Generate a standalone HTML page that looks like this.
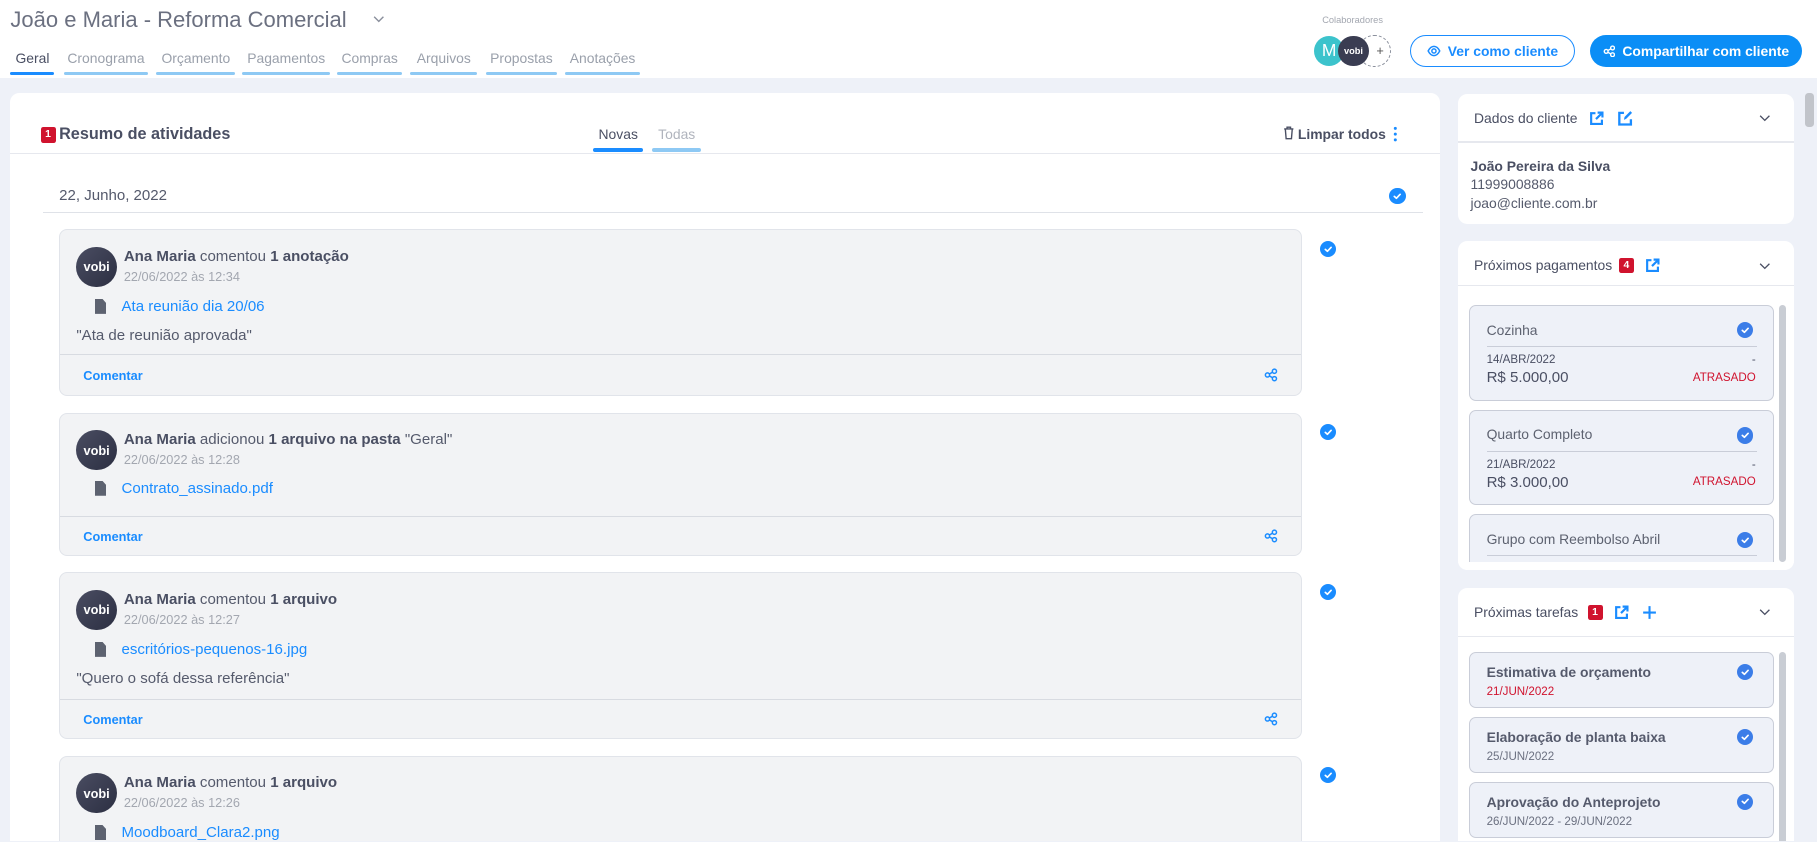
<!DOCTYPE html>
<html><head><meta charset="utf-8">
<style>
html{zoom:1.1588;overflow:hidden;background:#eef1f8;height:100%}
*{box-sizing:border-box;margin:0;padding:0}
body{width:1568px;height:726px;overflow:hidden;background:#eef1f8;font-family:"Liberation Sans",sans-serif;color:#4a4f63}
#w{position:relative;width:1568px;height:726px;overflow:hidden}
.a{position:absolute}
.hdr{left:0;top:0;width:1568px;height:67px;background:#fff}
.tab{top:43px;font-size:12px;color:#9aa0ab;text-align:center}
.bar{top:62px;height:3px;border-radius:2px;background:#8ec9f4}
.btn{border-radius:15px;font-size:13px;font-weight:bold;display:flex;align-items:center;justify-content:center;gap:6px}
.panel{background:#fff;border-radius:8px}
.chk{width:14px;height:14px;border-radius:50%;background:#1a8cff;display:flex;align-items:center;justify-content:center}
.chk svg{width:9px;height:9px}
.card{left:51px;width:1073px;background:#f2f3f5;border:1px solid #e1e4ea;border-radius:7px}
.av{left:14px;top:14px;width:35px;height:35px;border-radius:50%;background:linear-gradient(135deg,#4a4d62,#2c2f42);color:#fff;font-size:11px;font-weight:bold;display:flex;align-items:center;justify-content:center}
.nm{left:55px;top:15px;font-size:13px;color:#555a6c}
.nm b{color:#4a4f63}
.dt{left:55px;top:33px;font-size:11px;color:#a3a7b0}
.fi{left:30px;width:10px;height:13px;background:#5d6270;clip-path:polygon(0 0,65% 0,100% 30%,100% 100%,0 100%)}
.lk{left:53px;font-size:13px;color:#1a8cff}
.qt{left:14px;font-size:13px;color:#555a6c}
.ft{left:0;right:0;height:35px;border-top:1px solid #d8dbe1}
.cm{left:20px;top:11px;font-size:11px;font-weight:bold;color:#1a8cff}
.sh{right:20px;top:11px}
.sc{left:1258px;width:290px;background:#fff;border-radius:8px}
.st{left:14px;font-size:12px;color:#4a4f63}
.badge{background:#d0132e;color:#fff;font-size:9px;font-weight:bold;width:13px;height:13px;border-radius:2px;display:flex;align-items:center;justify-content:center}
.it{left:10px;width:263px;background:#eef1f8;border:1px solid #c9cdd8;border-radius:6px}
.ic{background:#3b7de8}
</style></head><body><div id="w">
<svg width="0" height="0" style="position:absolute"><defs>
<symbol id="ck" viewBox="0 0 10 10"><path d="M2.2 5.2 L4.2 7 L7.8 3.2" stroke="#fff" stroke-width="1.6" fill="none" stroke-linecap="round" stroke-linejoin="round"/></symbol>
<symbol id="shr" viewBox="0 0 12 12"><g fill="none" stroke="#1a8cff" stroke-width="1.3"><circle cx="3" cy="6" r="1.8"/><circle cx="9" cy="2.8" r="1.8"/><circle cx="9" cy="9.2" r="1.8"/><path d="M4.6 5.2 7.4 3.6M4.6 6.8 7.4 8.4"/></g></symbol>
<symbol id="ext" viewBox="0 0 14 14"><g fill="none" stroke="#1a8cff" stroke-width="2"><path d="M6 2H2v10h10V8"/><path d="M8 1.5h4.5V6M12.3 1.7 6.5 7.5"/></g></symbol>
</defs></svg>

<div class="a hdr"></div>
<div class="a" style="left:9px;top:6px;font-size:19px;color:#6b7080">João e Maria - Reforma Comercial</div>
<svg class="a" style="left:322px;top:13px" width="10" height="7" viewBox="0 0 10 7"><path d="M1 1.5 5 5.5 9 1.5" stroke="#8a8f9c" fill="none" stroke-width="1.2"/></svg>
<div class="a tab" style="left:9px;width:38px;color:#4a4f63">Geral</div>
<div class="a tab" style="left:55px;width:73px">Cronograma</div>
<div class="a tab" style="left:135px;width:68px">Orçamento</div>
<div class="a tab" style="left:209px;width:76px">Pagamentos</div>
<div class="a tab" style="left:291px;width:56px">Compras</div>
<div class="a tab" style="left:354px;width:58px">Arquivos</div>
<div class="a tab" style="left:419px;width:62px">Propostas</div>
<div class="a tab" style="left:488px;width:64px">Anotações</div>
<div class="a bar" style="left:9px;width:38px;background:#1a8cff"></div>
<div class="a bar" style="left:55px;width:73px"></div>
<div class="a bar" style="left:135px;width:68px"></div>
<div class="a bar" style="left:209px;width:76px"></div>
<div class="a bar" style="left:291px;width:56px"></div>
<div class="a bar" style="left:354px;width:58px"></div>
<div class="a bar" style="left:419px;width:62px"></div>
<div class="a bar" style="left:488px;width:64px"></div>

<div class="a" style="left:1141px;top:13px;font-size:8px;color:#a3a7b0">Colaboradores</div>
<div class="a" style="left:1172px;top:30px;width:28px;height:28px;border-radius:50%;border:1px dashed #8a8f9c;background:#fff;font-size:11px;color:#555;display:flex;align-items:center;justify-content:flex-end;padding-right:5px">+</div>
<div class="a" style="left:1134px;top:31px;width:26px;height:26px;border-radius:50%;background:#3cc3cc;color:#fff;font-size:15px;display:flex;align-items:center;justify-content:center">M</div>
<div class="a" style="left:1155px;top:31px;width:26px;height:26px;border-radius:50%;background:#3a3d52;color:#fff;font-size:8px;font-weight:bold;display:flex;align-items:center;justify-content:center">vobi</div>
<div class="a btn" style="left:1217px;top:30px;width:142px;height:28px;border:1px solid #1a8cff;color:#1a8cff;background:#fff;font-size:12px"><svg width="12" height="12" viewBox="0 0 12 12"><g fill="none" stroke="#1a8cff" stroke-width="1.3"><path d="M1 6C2.5 3 4 2 6 2s3.5 1 5 4c-1.5 3-3 4-5 4S2.5 9 1 6z"/><circle cx="6" cy="6" r="1.8"/></g></svg>Ver como cliente</div>
<div class="a btn" style="left:1372px;top:30px;width:183px;height:28px;background:#0b8ef6;color:#fff;font-size:12px"><svg width="11" height="11" viewBox="0 0 12 12"><g fill="none" stroke="#fff" stroke-width="1.3"><circle cx="3" cy="6" r="1.8"/><circle cx="9" cy="2.8" r="1.8"/><circle cx="9" cy="9.2" r="1.8"/><path d="M4.6 5.2 7.4 3.6M4.6 6.8 7.4 8.4"/></g></svg>Compartilhar com cliente</div>

<div class="a panel" style="left:9px;top:80px;width:1234px;height:760px"></div>
<div class="a badge" style="left:35px;top:110px">1</div>
<div class="a" style="left:51px;top:108px;font-size:14px;font-weight:bold;color:#4a4f63">Resumo de atividades</div>
<div class="a" style="left:512px;top:109px;width:43px;text-align:center;font-size:12px;color:#4a4f63">Novas</div>
<div class="a" style="left:563px;top:109px;width:42px;text-align:center;font-size:12px;color:#b0b4bd">Todas</div>
<div class="a" style="left:512px;top:128px;width:43px;height:3px;border-radius:2px;background:#1a8cff"></div>
<div class="a" style="left:563px;top:128px;width:42px;height:3px;border-radius:2px;background:#8ec9f4"></div>
<svg class="a" style="left:1107px;top:109px" width="10" height="12" viewBox="0 0 10 12"><g fill="none" stroke="#4a4f63" stroke-width="1.2"><path d="M1 2.5h8M3.5 2.5V1h3v1.5M2 2.5l.7 8.5h4.6L8 2.5"/></g></svg>
<div class="a" style="left:1120px;top:109px;font-size:12px;font-weight:bold;color:#4a4f63">Limpar todos</div>
<svg class="a" style="left:1202px;top:109px" width="4" height="14" viewBox="0 0 4 14"><g fill="#1a8cff"><circle cx="2" cy="2" r="1.3"/><circle cx="2" cy="7" r="1.3"/><circle cx="2" cy="12" r="1.3"/></g></svg>
<div class="a" style="left:9px;top:132px;width:1234px;height:1px;background:#e6e8ee"></div>
<div class="a" style="left:51px;top:161px;font-size:13px;color:#555a6c">22, Junho, 2022</div>
<div class="a chk" style="left:1199px;top:162px"><svg><use href="#ck"/></svg></div>
<div class="a" style="left:37px;top:183px;width:1191px;height:1px;background:#dfe2e8"></div>

<div class="a card" style="top:198px;height:144px">
 <div class="a av">vobi</div>
 <div class="a nm"><b>Ana Maria</b> comentou <b>1 anotação</b></div>
 <div class="a dt">22/06/2022 às 12:34</div>
 <div class="a fi" style="top:59px"></div>
 <div class="a lk" style="top:58px">Ata reunião dia 20/06</div>
 <div class="a qt" style="top:83px">"Ata de reunião aprovada"</div>
 <div class="a ft" style="top:107px"><div class="a cm">Comentar</div><svg class="a sh" width="12" height="12"><use href="#shr"/></svg></div>
</div>
<div class="a chk" style="left:1139px;top:208px"><svg><use href="#ck"/></svg></div>

<div class="a card" style="top:356px;height:124px">
 <div class="a av">vobi</div>
 <div class="a nm"><b>Ana Maria</b> adicionou <b>1 arquivo na pasta</b> "Geral"</div>
 <div class="a dt">22/06/2022 às 12:28</div>
 <div class="a fi" style="top:58px"></div>
 <div class="a lk" style="top:57px">Contrato_assinado.pdf</div>
 <div class="a ft" style="top:88px"><div class="a cm">Comentar</div><svg class="a sh" width="12" height="12"><use href="#shr"/></svg></div>
</div>
<div class="a chk" style="left:1139px;top:366px"><svg><use href="#ck"/></svg></div>

<div class="a card" style="top:494px;height:144px">
 <div class="a av">vobi</div>
 <div class="a nm"><b>Ana Maria</b> comentou <b>1 arquivo</b></div>
 <div class="a dt">22/06/2022 às 12:27</div>
 <div class="a fi" style="top:59px"></div>
 <div class="a lk" style="top:58px">escritórios-pequenos-16.jpg</div>
 <div class="a qt" style="top:83px">"Quero o sofá dessa referência"</div>
 <div class="a ft" style="top:108px"><div class="a cm">Comentar</div><svg class="a sh" width="12" height="12"><use href="#shr"/></svg></div>
</div>
<div class="a chk" style="left:1139px;top:504px"><svg><use href="#ck"/></svg></div>

<div class="a card" style="top:652px;height:200px">
 <div class="a av">vobi</div>
 <div class="a nm"><b>Ana Maria</b> comentou <b>1 arquivo</b></div>
 <div class="a dt">22/06/2022 às 12:26</div>
 <div class="a fi" style="top:59px"></div>
 <div class="a lk" style="top:58px">Moodboard_Clara2.png</div>
</div>
<div class="a chk" style="left:1139px;top:662px"><svg><use href="#ck"/></svg></div>

<div class="a sc" style="top:81px;height:112px">
 <div class="a st" style="top:14px">Dados do cliente</div>
 <svg class="a" style="left:113px;top:15px" width="13" height="13"><use href="#ext"/></svg>
 <svg class="a" style="left:137px;top:14px" width="14" height="14" viewBox="0 0 14 14"><g fill="none" stroke="#1a8cff" stroke-width="2"><path d="M6 2.5H2v10h10V8"/></g><path d="M6 8.5 6.5 6 11.5 1 13 2.5 8 7.5z" fill="#1a8cff"/></svg>
 <svg class="a" style="left:260px;top:17px" width="10" height="7" viewBox="0 0 10 7"><path d="M1 1.5 5 5.5 9 1.5" stroke="#4a4f63" fill="none" stroke-width="1.1"/></svg>
 <div class="a" style="left:0;top:41px;width:290px;height:1px;background:#e6e8ee"></div>
 <div class="a" style="left:11px;top:55px;font-size:12px;font-weight:bold">João Pereira da Silva</div>
 <div class="a" style="left:11px;top:71px;font-size:12px;color:#555a6c">11999008886</div>
 <div class="a" style="left:11px;top:87px;font-size:12px;color:#555a6c">joao@cliente.com.br</div>
</div>

<div class="a sc" style="top:208px;height:284px;overflow:hidden">
 <div class="a st" style="top:14px">Próximos pagamentos</div>
 <div class="a badge" style="left:139px;top:15px">4</div>
 <svg class="a" style="left:162px;top:15px" width="13" height="13"><use href="#ext"/></svg>
 <svg class="a" style="left:260px;top:18px" width="10" height="7" viewBox="0 0 10 7"><path d="M1 1.5 5 5.5 9 1.5" stroke="#4a4f63" fill="none" stroke-width="1.1"/></svg>
 <div class="a" style="left:0;top:38px;width:290px;height:1px;background:#e6e8ee"></div>
 <div class="a" style="left:277px;top:55px;width:6px;height:222px;border-radius:3px;background:#c9cdd4"></div>
 <div class="a it" style="top:55px;height:83px">
  <div class="a" style="left:14px;top:14px;font-size:12px;color:#5d6270">Cozinha</div>
  <div class="a chk ic" style="left:230px;top:14px"><svg><use href="#ck"/></svg></div>
  <div class="a" style="left:14px;top:35px;width:233px;height:1px;background:#c9cdd8"></div>
  <div class="a" style="left:14px;top:42px;font-size:10px;color:#4a4f63">14/ABR/2022</div>
  <div class="a" style="right:15px;top:42px;font-size:10px">-</div>
  <div class="a" style="left:14px;top:55px;font-size:13px;color:#4a4f63">R$ 5.000,00</div>
  <div class="a" style="right:15px;top:57px;font-size:10px;color:#d0132e">ATRASADO</div>
 </div>
 <div class="a it" style="top:146px;height:82px">
  <div class="a" style="left:14px;top:13px;font-size:12px;color:#5d6270">Quarto Completo</div>
  <div class="a chk ic" style="left:230px;top:14px"><svg><use href="#ck"/></svg></div>
  <div class="a" style="left:14px;top:34px;width:233px;height:1px;background:#c9cdd8"></div>
  <div class="a" style="left:14px;top:41px;font-size:10px">21/ABR/2022</div>
  <div class="a" style="right:15px;top:41px;font-size:10px">-</div>
  <div class="a" style="left:14px;top:54px;font-size:13px">R$ 3.000,00</div>
  <div class="a" style="right:15px;top:56px;font-size:10px;color:#d0132e">ATRASADO</div>
 </div>
 <div class="a it" style="top:236px;height:82px">
  <div class="a" style="left:14px;top:13px;font-size:12px;color:#5d6270">Grupo com Reembolso Abril</div>
  <div class="a chk ic" style="left:230px;top:14px"><svg><use href="#ck"/></svg></div>
  <div class="a" style="left:14px;top:34px;width:233px;height:1px;background:#c9cdd8"></div>
 </div>
 <div class="a" style="left:0;top:277px;width:290px;height:7px;background:#fff"></div>
</div>

<div class="a sc" style="top:507px;height:320px">
 <div class="a st" style="top:14px">Próximas tarefas</div>
 <div class="a badge" style="left:112px;top:15px">1</div>
 <svg class="a" style="left:135px;top:15px" width="13" height="13"><use href="#ext"/></svg>
 <svg class="a" style="left:159px;top:15px" width="13" height="13" viewBox="0 0 13 13"><path d="M6.5 1v11M1 6.5h11" stroke="#1a8cff" stroke-width="1.8"/></svg>
 <svg class="a" style="left:260px;top:18px" width="10" height="7" viewBox="0 0 10 7"><path d="M1 1.5 5 5.5 9 1.5" stroke="#4a4f63" fill="none" stroke-width="1.1"/></svg>
 <div class="a" style="left:0;top:42px;width:290px;height:1px;background:#e6e8ee"></div>
 <div class="a" style="left:277px;top:56px;width:6px;height:260px;border-radius:3px;background:#c9cdd4"></div>
 <div class="a it" style="top:56px;height:48px">
  <div class="a" style="left:14px;top:9px;font-size:12px;font-weight:bold;color:#555a6c">Estimativa de orçamento</div>
  <div class="a" style="left:14px;top:28px;font-size:10px;color:#d0132e">21/JUN/2022</div>
  <div class="a chk ic" style="left:230px;top:9px"><svg><use href="#ck"/></svg></div>
 </div>
 <div class="a it" style="top:112px;height:48px">
  <div class="a" style="left:14px;top:9px;font-size:12px;font-weight:bold;color:#555a6c">Elaboração de planta baixa</div>
  <div class="a" style="left:14px;top:28px;font-size:10px;color:#6b7080">25/JUN/2022</div>
  <div class="a chk ic" style="left:230px;top:9px"><svg><use href="#ck"/></svg></div>
 </div>
 <div class="a it" style="top:168px;height:48px">
  <div class="a" style="left:14px;top:9px;font-size:12px;font-weight:bold;color:#555a6c">Aprovação do Anteprojeto</div>
  <div class="a" style="left:14px;top:28px;font-size:10px;color:#6b7080">26/JUN/2022 - 29/JUN/2022</div>
  <div class="a chk ic" style="left:230px;top:9px"><svg><use href="#ck"/></svg></div>
 </div>
</div>

<div class="a" style="left:1556px;top:67px;width:12px;height:760px;background:#eef1f8"></div>
<div class="a" style="left:1558px;top:80px;width:7px;height:30px;border-radius:3px;background:#c1c4ca"></div>
</div></body></html>
